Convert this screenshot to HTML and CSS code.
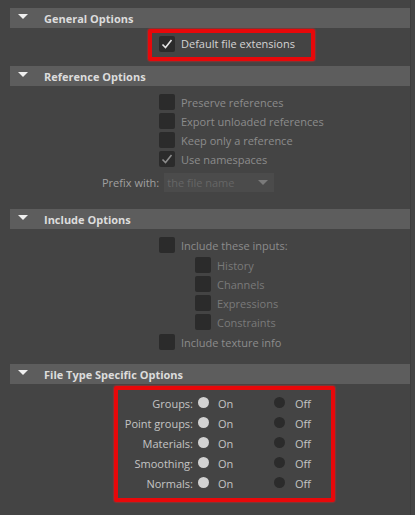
FILE: index.html
```html
<!DOCTYPE html>
<html lang="en">
<head>
  <meta charset="UTF-8" />
  <title>Export Options</title>
  <link rel="stylesheet" href="styles.css">
</head>
<body>
  <div class="panel">

    <div class="frame-header"><span class="arrow"></span>General Options</div>
    <div class="frame-body general">
      <div class="highlight small">
        <label class="check on">
          <span class="box"><svg viewBox="0 0 16 16"><path d="M3.5 8.5 L6.5 11.5 L12.5 4" /></svg></span>
          Default file extensions
        </label>
      </div>
    </div>

    <div class="frame-header"><span class="arrow"></span>Reference Options</div>
    <div class="frame-body refs">
      <label class="check dim"><span class="box"></span>Preserve references</label>
      <label class="check dim"><span class="box"></span>Export unloaded references</label>
      <label class="check dim"><span class="box"></span>Keep only a reference</label>
      <label class="check dim"><span class="box"><svg viewBox="0 0 16 16"><path d="M3.5 8.5 L6.5 11.5 L12.5 4" /></svg></span>Use namespaces</label>
      <div class="prefix-row">
        <span class="prefix-label">Prefix with:</span>
        <div class="dropdown">
          <span class="dropdown-text">the file name</span>
          <span class="dropdown-arrow"></span>
        </div>
      </div>
    </div>

    <div class="frame-header"><span class="arrow"></span>Include Options</div>
    <div class="frame-body includes">
      <label class="check dim"><span class="box"></span>Include these inputs:</label>
      <label class="check dimmer sub"><span class="box"></span>History</label>
      <label class="check dimmer sub"><span class="box"></span>Channels</label>
      <label class="check dimmer sub"><span class="box"></span>Expressions</label>
      <label class="check dimmer sub"><span class="box"></span>Constraints</label>
      <label class="check dim last"><span class="box"></span>Include texture info</label>
    </div>

    <div class="frame-header"><span class="arrow"></span>File Type Specific Options</div>
    <div class="frame-body filetype">
      <div class="highlight big">
        <div class="radio-grid">
          <span class="radio-label">Groups:</span><span class="radio sel"></span><span>On</span><span class="radio"></span><span>Off</span>
          <span class="radio-label">Point groups:</span><span class="radio sel"></span><span>On</span><span class="radio"></span><span>Off</span>
          <span class="radio-label">Materials:</span><span class="radio sel"></span><span>On</span><span class="radio"></span><span>Off</span>
          <span class="radio-label">Smoothing:</span><span class="radio sel"></span><span>On</span><span class="radio"></span><span>Off</span>
          <span class="radio-label">Normals:</span><span class="radio sel"></span><span>On</span><span class="radio"></span><span>Off</span>
        </div>
      </div>
    </div>

  </div>
</body>
</html>
```

FILE: styles.css
```css
body {
  margin: 0;
  background: #444444;
  font-family: 'Open Sans', 'Noto Sans', sans-serif;
  font-size: 11px;
  color: #d4d4d4;
}

.panel {
  width: 400px;
  padding: 8px 0 0 10px;
  border-right: 1px solid #3c3c3c;
  min-height: 507px;
}

/* collapsible frame headers */
.frame-header {
  height: 20px;
  background: #5d5d5d;
  display: flex;
  align-items: center;
  font-weight: bold;
  color: #dcdcdc;
  font-size: 11px;
}

.arrow {
  width: 0;
  height: 0;
  border-left: 5px solid transparent;
  border-right: 5px solid transparent;
  border-top: 5px solid #f0f0f0;
  margin: -4px 16px 0 8px;
}

.frame-body {
  display: flex;
  flex-direction: column;
  padding-left: 149px;
}

/* checkboxes */
.check {
  display: flex;
  align-items: center;
  height: 16px;
  gap: 6px;
  margin-bottom: 3px;
}

.box {
  width: 16px;
  height: 16px;
  background: #2b2b2b;
  border-radius: 2px;
  flex-shrink: 0;
}

.box svg {
  width: 16px;
  height: 16px;
  display: block;
}

.box path {
  fill: none;
  stroke: #e6e6e6;
  stroke-width: 1.6;
}

.check.dim { color: #8c8c8c; }
.check.dim .box path { stroke: #8c8c8c; }
.check.dimmer { color: #7a7a7a; }
.check.sub { margin-left: 36px; }

/* red highlight frames */
.highlight {
  border: 4px solid #e8080a;
  border-radius: 2px;
  box-shadow: 0 0 2px #ff2020;
}

.highlight.small {
  width: 152px;
  height: 24px;
  margin: 1px 0 0 -11px;
  padding-left: 7px;
  display: flex;
  align-items: center;
}

.general { padding-bottom: 5px; }

.refs { padding-top: 8px; padding-bottom: 17px; }

.prefix-row {
  display: flex;
  align-items: center;
  margin: 3px 0 0 -57px;
  gap: 5px;
}

.prefix-label { color: #a0a0a0; }

.dropdown {
  width: 110px;
  height: 19px;
  background: #4b4b4b;
  display: flex;
  align-items: center;
  justify-content: space-between;
}

.dropdown-text {
  color: #666666;
  padding-left: 3px;
}

.dropdown-arrow {
  width: 0;
  height: 0;
  border-left: 5px solid transparent;
  border-right: 5px solid transparent;
  border-top: 5px solid #7a7a7a;
  margin-right: 6px;
}

.includes { padding-top: 8px; padding-bottom: 11px; }
.includes .check:first-child { margin-bottom: 4px; }
.includes .check.last { margin-top: 1px; }

.filetype { padding-left: 104px; padding-top: 2px; }

.highlight.big {
  width: 213px;
  height: 108px;
}

/* label | radio | On | radio | Off */
.radio-grid {
  display: grid;
  grid-template-columns: 80px 20px 56px 21px auto;
  grid-auto-rows: 20px;
  align-items: center;
  padding-top: 3px;
  color: #c4c4c4;
}

.radio-label {
  text-align: right;
  padding-right: 5px;
  white-space: nowrap;
}

.radio {
  width: 11px;
  height: 11px;
  border-radius: 50%;
  background: #2b2b2b;
  margin-top: -2px;
}

.radio.sel { background: #d2d2d2; }
```
